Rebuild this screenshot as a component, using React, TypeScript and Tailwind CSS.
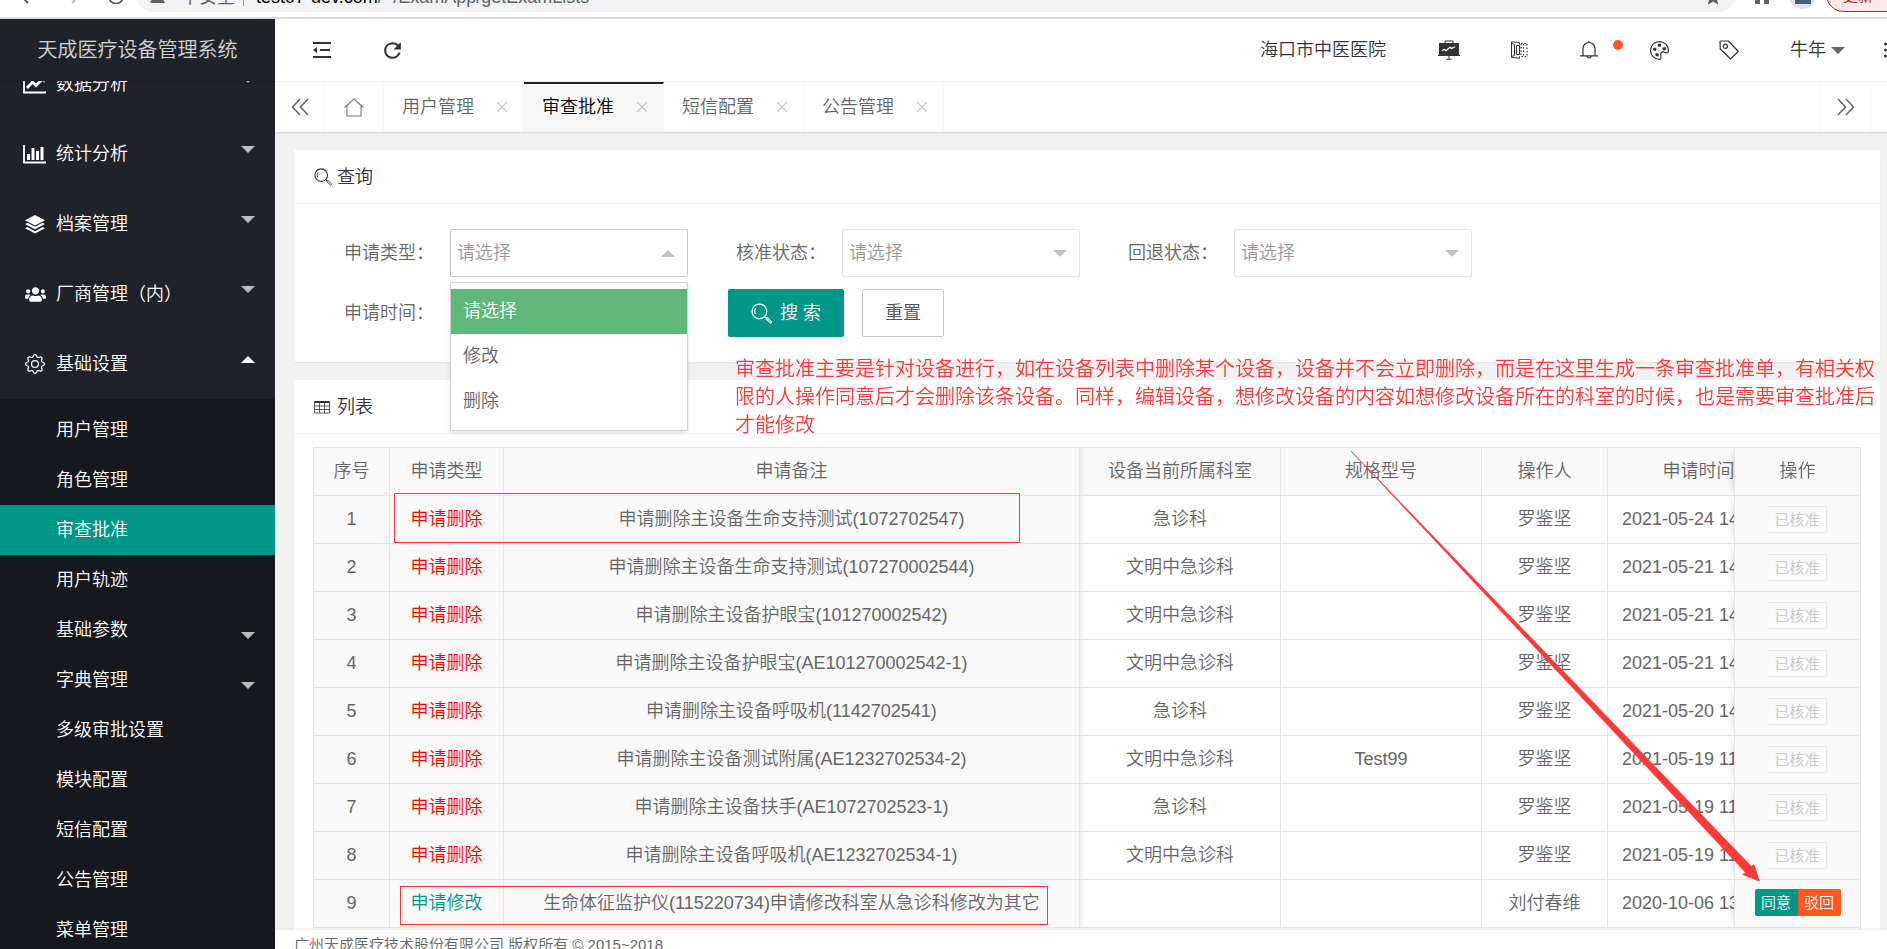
import { useState } from 'react'
import type { ReactNode } from 'react'
import clsx from 'clsx'
import { BsGear, BsPalette } from 'react-icons/bs'
import { FaUsers } from 'react-icons/fa'
import { MdRefresh } from 'react-icons/md'

const subMenu = [
  { label: '用户管理' },
  { label: '角色管理' },
  { label: '审查批准', active: true },
  { label: '用户轨迹' },
  { label: '基础参数', nested: true },
  { label: '字典管理', nested: true },
  { label: '多级审批设置' },
  { label: '模块配置' },
  { label: '短信配置' },
  { label: '公告管理' },
  { label: '菜单管理' },
]

const tabs = ['用户管理', '审查批准', '短信配置', '公告管理']

const rows = [
  { type: '申请删除', note: '申请删除主设备生命支持测试(1072702547)', dept: '急诊科', model: '', user: '罗鉴坚', time: '2021-05-24 14' },
  { type: '申请删除', note: '申请删除主设备生命支持测试(107270002544)', dept: '文明中急诊科', model: '', user: '罗鉴坚', time: '2021-05-21 14' },
  { type: '申请删除', note: '申请删除主设备护眼宝(101270002542)', dept: '文明中急诊科', model: '', user: '罗鉴坚', time: '2021-05-21 14' },
  { type: '申请删除', note: '申请删除主设备护眼宝(AE101270002542-1)', dept: '文明中急诊科', model: '', user: '罗鉴坚', time: '2021-05-21 14' },
  { type: '申请删除', note: '申请删除主设备呼吸机(1142702541)', dept: '急诊科', model: '', user: '罗鉴坚', time: '2021-05-20 14' },
  { type: '申请删除', note: '申请删除主设备测试附属(AE1232702534-2)', dept: '文明中急诊科', model: 'Test99', user: '罗鉴坚', time: '2021-05-19 11' },
  { type: '申请删除', note: '申请删除主设备扶手(AE1072702523-1)', dept: '急诊科', model: '', user: '罗鉴坚', time: '2021-05-19 11' },
  { type: '申请删除', note: '申请删除主设备呼吸机(AE1232702534-1)', dept: '文明中急诊科', model: '', user: '罗鉴坚', time: '2021-05-19 11' },
  { type: '申请修改', note: '生命体征监护仪(115220734)申请修改科室从急诊科修改为其它', dept: '', model: '', user: '刘付春维', time: '2020-10-06 13', pending: true },
]

function Caret({ up, className }: { up?: boolean; className?: string }) {
  return (
    <svg viewBox="0 0 14 7" className={clsx('h-[7px] w-[14px] fill-current', up && 'rotate-180', className)}>
      <path d="M0 0h14L7 7z" />
    </svg>
  )
}

function SearchIcon({ className }: { className?: string }) {
  return (
    <svg viewBox="0 0 20 20" className={className} fill="none" stroke="currentColor">
      <circle cx="8" cy="8" r="7" strokeWidth="1.2" />
      <path d="M4.2 10.5a5 5 0 0 1 .4-5.6" strokeWidth="1" />
      <path d="M13.3 13.2l1.6 1.4" strokeWidth="1.2" />
      <path d="M14.4 15.2l1.2-1.3 3.6 3.7a.8.8 0 0 1-1.2 1.2z" strokeWidth="1" />
    </svg>
  )
}

function LineChartIcon() {
  return (
    <svg viewBox="0 0 24 20" className="h-5 w-6" fill="none" stroke="currentColor">
      <path d="M1 1v17.5h22" strokeWidth="1.8" />
      <path d="M4 14l5.5-6 3.5 3.5L20 4.5" strokeWidth="2.8" />
      <path d="M15.5 3h6v6z" fill="currentColor" stroke="none" />
    </svg>
  )
}

function BarChartIcon() {
  return (
    <svg viewBox="0 0 24 20" className="h-5 w-6">
      <path d="M1 1v17.5h22" fill="none" stroke="currentColor" strokeWidth="1.8" />
      <path d="M4 10h3v6H4zM8.5 4h3v12h-3zM13 7h3v9h-3zM17.5 3h3v13h-3z" fill="currentColor" />
    </svg>
  )
}

function LayersIcon() {
  return (
    <svg viewBox="0 0 20 19" className="h-[19px] w-5" fill="currentColor">
      <path d="M10 0l10 5.2-10 5.3L0 5.2z" />
      <path d="M0 9l2.5-1.2L10 11.7l7.5-3.9L20 9l-10 5.2z" />
      <path d="M0 13.2L2.2 12l7.8 4.2 7.8-4.2 2.2 1.2L10 18.6z" />
    </svg>
  )
}

const menu: { label: string; icon: ReactNode; open?: boolean }[] = [
  { label: '数据分析', icon: <LineChartIcon /> },
  { label: '统计分析', icon: <BarChartIcon /> },
  { label: '档案管理', icon: <LayersIcon /> },
  { label: '厂商管理（内）', icon: <FaUsers size={21} /> },
  { label: '基础设置', icon: <BsGear size={20} />, open: true },
]

function BrowserBar() {
  return (
    <div className="flex h-[19px] shrink-0 items-end overflow-hidden border-b-2 border-[#dadce0] bg-white font-normal">
      <div className="mb-[13px] flex w-[136px] shrink-0 items-end gap-7 pl-5 text-[#5f6368]">
        <svg viewBox="0 0 16 16" className="size-4" fill="none" stroke="currentColor" strokeWidth="2">
          <path d="M15 8H2M8 1L1 8l7 7" />
        </svg>
        <svg viewBox="0 0 16 16" className="size-4 text-[#babcbe]" fill="none" stroke="currentColor" strokeWidth="2">
          <path d="M1 8h13M8 1l7 7-7 7" />
        </svg>
        <svg viewBox="0 0 16 16" className="size-4" fill="none" stroke="currentColor" strokeWidth="2">
          <path d="M14 5a7 7 0 1 0 1 4M15 1v5h-5" />
        </svg>
      </div>
      <div className="mb-[5px] flex h-[35px] flex-1 items-center rounded-full bg-[#f1f3f4] px-[14px] pt-1 text-lg text-[#5f6368]">
        <svg viewBox="0 0 16 16" className="mr-4 size-[15px] fill-current">
          <path d="M7 1h2l7 14H0z" />
        </svg>
        <span>不安全</span>
        <span className="mx-2 h-[18px] w-px bg-[#9aa0a6]" />
        <span className="ml-1 text-black">test07-dev.com</span>
        <span>/~/ExamApp/getExamLists</span>
        <svg viewBox="0 0 20 20" className="ml-auto size-[18px] fill-current">
          <path d="M10 1l2.700 6 6.300.600-4.800 4.200 1.500 6.500L10 14.900l-5.700 3.400 1.500-6.500L1 7.600 7.300 7z" />
        </svg>
      </div>
      <div className="flex w-[151px] shrink-0 items-end">
        <svg viewBox="0 0 16 16" className="mb-[13px] ml-[18px] size-4 shrink-0 fill-[#5f6368]">
          <path d="M1 4h14v12h-5v-4H6v4H1z" />
        </svg>
        <span className="mb-2 ml-[19px] flex size-[27px] shrink-0 items-center justify-center rounded-full bg-[#dee1e6]">
          <span className="size-4 bg-[#4a5b76]" />
        </span>
        <span className="mb-[5px] ml-[10px] flex h-[35px] w-24 shrink-0 items-center rounded-full border border-[#c5221f] bg-[#fce8e6] pt-1 pl-4 text-[15px] text-[#c5221f]">
          更新
        </span>
      </div>
    </div>
  )
}

function Sidebar() {
  return (
    <aside className="flex w-[275px] shrink-0 flex-col bg-[#20222a] text-white">
      <h1 className="relative z-10 flex h-[62px] shrink-0 items-center justify-center bg-[#20222a] text-[20px] text-white/80 shadow-[0_1px_2px_rgba(0,0,0,0.15)]">
        天成医疗设备管理系统
      </h1>
      <nav className="min-h-0 flex-1 overflow-hidden">
        <ul className="-mt-8">
          {menu.map((item) => (
            <li key={item.label}>
              <a href="#" className="flex h-[70px] items-center pr-5 pl-[23px] text-lg">
                <span className="mr-[9px] flex w-6 justify-center">{item.icon}</span>
                {item.label}
                <Caret up={item.open} className={clsx('mb-2.5 ml-auto', !item.open && 'text-white/70')} />
              </a>
            </li>
          ))}
        </ul>
        <ul className="bg-[#17181d] py-[6px]">
          {subMenu.map((item) => (
            <li key={item.label}>
              <a
                href="#"
                className={clsx('flex h-[50px] items-center pr-5 pl-14 text-lg', item.active && 'bg-[#009688]')}
              >
                {item.label}
                {item.nested && <Caret className="mt-2.5 ml-auto text-white/70" />}
              </a>
            </li>
          ))}
        </ul>
      </nav>
    </aside>
  )
}

function IconButton({ label, children }: { label: string; children: ReactNode }) {
  return (
    <button type="button" aria-label={label} className="relative flex h-full w-[70px] items-center justify-center">
      {children}
    </button>
  )
}

function Header() {
  return (
    <header className="flex h-[63px] shrink-0 items-center overflow-hidden border-b border-[#f6f6f6] bg-white pl-3 text-lg text-[#333]">
      <IconButton label="侧边伸缩">
        <svg viewBox="0 0 20 18" className="h-[18px] w-5 fill-current">
          <path d="M1 1h18v2H1zM1 15h18v2H1zM8 8h10v2H8zM1 9l4-3v6z" />
        </svg>
      </IconButton>
      <IconButton label="刷新">
        <MdRefresh size={25} />
      </IconButton>
      <span className="ml-auto pr-7">海口市中医医院</span>
      <IconButton label="大屏">
        <svg viewBox="0 0 22 20" className="h-5 w-[22px]" fill="none" stroke="currentColor">
          <path d="M1 3h20v12H1z" fill="currentColor" stroke="none" />
          <path d="M0 15.500h22M7 3V1h8v2M11 15v4M8.500 19.300h5" strokeWidth="1" />
          <path d="M4 10.500l2.500-1 1.500 1.300 4-3.500 1.500 1.200L17 6.800" stroke="white" strokeWidth="1.200" />
        </svg>
      </IconButton>
      <IconButton label="手册">
        <svg viewBox="0 0 18 18" className="size-[18px]" fill="none" stroke="currentColor">
          <path d="M9.500 3.500V1.500L1.500.8v15.500l8 1v-2M1.500 2.500l3 1v11l-3 1M9.500 4.500h-3v9h3z" strokeWidth="1" />
          <path d="M11 2.500h6v13h-6zM13.500 3v12" strokeWidth="1.200" strokeDasharray="1.500 1.800" />
        </svg>
      </IconButton>
      <IconButton label="消息">
        <svg viewBox="0 0 18 20" className="h-5 w-[18px]" fill="none" stroke="currentColor" strokeWidth="1.200">
          <path d="M3 15.500V8.500a6 6 0 0 1 12 0v7M0 15.800h18M6.800 16.300a2.300 2.300 0 0 0 4.400 0M9 2.300V1" />
        </svg>
        <span className="absolute top-[21px] right-[1px] size-[10px] rounded-full bg-[#ff5722]" />
      </IconButton>
      <IconButton label="主题">
        <BsPalette size={19} />
      </IconButton>
      <IconButton label="便签">
        <svg viewBox="0 0 20 20" className="size-5" fill="none" stroke="currentColor" strokeWidth="1.200">
          <path d="M1 2.200Q.8 1 2 1h7.500L19.300 11.500 11.500 19 1.300 9z" strokeLinejoin="round" />
          <circle cx="6.300" cy="6.300" r="2.100" />
        </svg>
      </IconButton>
      <button type="button" className="flex h-full items-center gap-[5px] pr-7 pl-[26px]">
        牛年
        <Caret className="text-[#666]" />
      </button>
      <button type="button" aria-label="更多" className="flex h-full w-[14px] items-center justify-end">
        <svg viewBox="0 0 3 16" className="h-4 w-[3px] fill-current">
          <circle cx="1.500" cy="2" r="1.500" />
          <circle cx="1.500" cy="8" r="1.500" />
          <circle cx="1.500" cy="14" r="1.500" />
        </svg>
      </button>
    </header>
  )
}

function TabBar() {
  return (
    <div className="relative z-10 flex h-[50px] shrink-0 bg-white text-lg text-[#666] shadow-[0_1px_2px_rgba(0,0,0,0.12)]">
      <button type="button" aria-label="向左" className="flex w-[50px] items-center justify-center border-r border-[#f6f6f6]">
        <svg viewBox="0 0 18 18" className="size-[18px]" fill="none" stroke="currentColor" strokeWidth="1.600">
          <path d="M9 1L1.500 9 9 17M17 1L9.500 9l7.500 8" />
        </svg>
      </button>
      <button type="button" aria-label="主页" className="flex w-[59px] items-center justify-center border-r border-[#f6f6f6]">
        <svg viewBox="0 0 20 19" className="h-[19px] w-5" fill="none" stroke="#777" strokeWidth="1.100">
          <path d="M.5 9.500L10 1l9.500 8.500M3 7.800V18h14V7.800" />
        </svg>
      </button>
      {tabs.map((tab) => (
        <div
          key={tab}
          className={clsx(
            'flex w-[140px] items-center justify-between border-r border-[#f6f6f6] pr-4 pl-[18px]',
            tab === '审查批准' && 'border-t-2 border-t-[#20222a] bg-[#f6f6f6] pb-[2px] text-black'
          )}
        >
          <a href="#">{tab}</a>
          <button type="button" aria-label={`关闭${tab}`} className="text-[#c2c2c2]">
            <svg viewBox="0 0 10 10" className="size-[10px]" fill="none" stroke="currentColor" strokeWidth="1.200">
              <path d="M0 0l10 10M10 0L0 10" />
            </svg>
          </button>
        </div>
      ))}
      <button
        type="button"
        aria-label="向右"
        className="mr-4 ml-auto flex w-[51px] items-center justify-center border-x border-[#f6f6f6]"
      >
        <svg viewBox="0 0 18 18" className="size-[18px]" fill="none" stroke="currentColor" strokeWidth="1.600">
          <path d="M1 1l7.500 8L1 17M9 1l7.500 8L9 17" />
        </svg>
      </button>
    </div>
  )
}

function SelectField({ id, label, open }: { id: string; label: string; open?: boolean }) {
  return (
    <div className="flex w-[392px] items-center">
      <label htmlFor={id} className="w-[106px] shrink-0">
        {label}：
      </label>
      <div className="relative w-[238px]">
        <select
          id={id}
          className={clsx(
            'h-12 w-full appearance-none rounded-[2px] border bg-white pl-[6px] text-[#999] outline-none',
            open ? 'border-[#c9c9c9]' : 'border-[#e6e6e6]'
          )}
        >
          <option>请选择</option>
        </select>
        <Caret up={open} className="pointer-events-none absolute top-[21px] right-[13px] text-[#c2c2c2]" />
        {open && (
          <ul
            role="listbox"
            aria-label={label}
            className="absolute top-[53px] left-0 z-20 w-full rounded-[2px] border border-[#d2d2d2] bg-white py-[6px] shadow-[0_2px_4px_rgba(0,0,0,0.12)]"
          >
            <li role="option" aria-selected="true" className="bg-[#5fb878] px-3 leading-[45px] text-white">
              请选择
            </li>
            <li role="option" aria-selected="false" className="px-3 leading-[45px]">
              修改
            </li>
            <li role="option" aria-selected="false" className="px-3 leading-[45px]">
              删除
            </li>
          </ul>
        )}
      </div>
    </div>
  )
}

function SearchCard({ open }: { open: boolean }) {
  return (
    <section className="rounded-[2px] bg-white shadow-[0_1px_2px_rgba(0,0,0,0.05)]">
      <h2 className="flex h-[54px] items-center gap-[5px] border-b border-[#f6f6f6] px-5 text-lg text-[#333]">
        <SearchIcon className="size-[18px]" />
        查询
      </h2>
      <form className="flex flex-col gap-3 py-[25px] pl-[50px] text-lg">
        <div className="flex flex-wrap">
          <SelectField id="apply-type" label="申请类型" open={open} />
          <SelectField id="approve-state" label="核准状态" />
          <SelectField id="return-state" label="回退状态" />
        </div>
        <div className="flex items-center">
          <span className="w-96">申请时间：</span>
          <button
            type="button"
            className="flex h-12 w-[116px] items-center justify-center gap-2 rounded-[2px] bg-[#009688] text-white"
          >
            <SearchIcon className="size-[21px]" />
            搜 索
          </button>
          <button type="reset" className="ml-[18px] h-12 w-[82px] rounded-[2px] border border-[#c9c9c9] text-[#555]">
            重置
          </button>
        </div>
      </form>
    </section>
  )
}

const th = 'h-12 border-r border-b border-[#e6e6e6] bg-[#f9f9f9] p-0 pb-0.5 font-[350]'
const td = 'h-12 border-r border-b border-[#e6e6e6] p-0 pb-0.5 text-center'
const fixedRight =
  'sticky right-0 z-10 border-r-0 border-l bg-[#f9f9f9] shadow-[-7px_0_7px_-6px_rgba(0,0,0,0.15)]'

function ListCard() {
  return (
    <section className="rounded-[2px] bg-white">
      <h2 className="flex h-[54px] items-center gap-[7px] border-b border-[#f6f6f6] px-5 text-lg text-[#333]">
        <svg viewBox="0 0 16 14" className="h-[14px] w-4" fill="none" stroke="currentColor">
          <path d="M.5 2h15" strokeWidth="2" />
          <path d="M.5 1.500v11.500h15V1.500M.5 6h15M.5 9.500h15M5.500 2v11M10.500 2v11" strokeWidth=".8" />
        </svg>
        列表
      </h2>
      <div className="mx-[19px] mt-[13px] overflow-hidden border border-[#e6e6e6]">
        <table className="w-full min-w-[1602px] table-fixed border-separate border-spacing-0 text-lg whitespace-nowrap">
          <colgroup>
            <col className="w-[76px]" />
            <col className="w-[114px]" />
            <col />
            <col className="w-[201px]" />
            <col className="w-[201px]" />
            <col className="w-[126px]" />
            <col className="w-[182px]" />
            <col className="w-[126px]" />
          </colgroup>
          <thead>
            <tr>
              <th className={th}>序号</th>
              <th className={th}>申请类型</th>
              <th className={th}>申请备注</th>
              <th className={clsx(th, 'shadow-[inset_8px_0_8px_-8px_rgba(0,0,0,0.12)]')}>设备当前所属科室</th>
              <th className={th}>规格型号</th>
              <th className={th}>操作人</th>
              <th className={th}>申请时间</th>
              <th className={clsx(th, fixedRight)}>操作</th>
            </tr>
          </thead>
          <tbody>
            {rows.map((row, i) => (
              <tr key={row.note}>
                <td className={clsx(td, 'bg-[#f9f9f9]')}>{i + 1}</td>
                <td className={clsx(td, 'bg-[#f9f9f9]', row.pending ? 'text-[#009688]' : 'text-[#ff0000]')}>
                  {row.type}
                </td>
                <td className={clsx(td, 'bg-[#f9f9f9]')}>{row.note}</td>
                <td className={clsx(td, 'shadow-[inset_8px_0_8px_-8px_rgba(0,0,0,0.12)]')}>{row.dept}</td>
                <td className={td}>{row.model}</td>
                <td className={td}>{row.user}</td>
                <td className="h-12 border-r border-b border-[#e6e6e6] p-0 pb-0.5 pl-[14px] text-left">{row.time}</td>
                <td className={clsx(td, fixedRight)}>
                  {row.pending ? (
                    <div className="flex justify-center text-[15px] text-white">
                      <button type="button" className="h-[27px] w-[43px] rounded-l-[2px] bg-[#009688]">
                        同意
                      </button>
                      <button type="button" className="h-[27px] w-[43px] rounded-r-[2px] bg-[#ff5722]">
                        驳回
                      </button>
                    </div>
                  ) : (
                    <button
                      type="button"
                      disabled
                      className="mx-auto mt-0.5 block h-[27px] w-[58px] rounded-r-[2px] border border-l-0 border-[#e6e6e6] bg-[#fbfbfb] text-[15px] leading-none text-[#c9c9c9]"
                    >
                      已核准
                    </button>
                  )}
                </td>
              </tr>
            ))}
            <tr className="bg-[#f9f9f9]">
              <td colSpan={8} className="h-12" />
            </tr>
          </tbody>
        </table>
      </div>
    </section>
  )
}

// Red notes drawn over the page
function Annotations() {
  return (
    <div className="pointer-events-none absolute inset-0 z-30 text-[#ff3838]">
      <p className="absolute top-[355px] left-[735px] w-[1146px] text-[20px] leading-[28px]">
        审查批准主要是针对设备进行，如在设备列表中删除某个设备，设备并不会立即删除，而是在这里生成一条审查批准单，有相关权限的人操作同意后才会删除该条设备。同样，编辑设备，想修改设备的内容如想修改设备所在的科室的时候，也是需要审查批准后才能修改
      </p>
      <div className="absolute top-[493px] left-[394px] h-[50px] w-[626px] border border-current" />
      <div className="absolute top-[886px] left-[400px] h-[39px] w-[648px] border border-current" />
      <svg
        viewBox="0 0 410 432"
        className="absolute top-[451px] left-[1351px] h-[432px] w-[410px] fill-current stroke-current"
      >
        <path
          strokeWidth=".6"
          d="M0 0L400.500 415.500 403 413.500 408.500 430.300 391.500 423.500 394.500 421.500z"
        />
      </svg>
    </div>
  )
}

export default function App() {
  const [typeOpen] = useState(true)

  return (
    <div className="relative flex h-screen flex-col overflow-hidden bg-[#f2f2f2] font-['Liberation_Sans','Noto_Sans_CJK_SC',sans-serif] font-[350] text-[#666]">
      <BrowserBar />
      <div className="flex min-h-0 flex-1">
        <Sidebar />
        <div className="flex min-w-0 flex-1 flex-col">
          <Header />
          <TabBar />
          <main className="flex min-h-0 flex-1 flex-col gap-[18px] overflow-hidden pt-[18px] pr-[7px] pl-[19px]">
            <SearchCard open={typeOpen} />
            <ListCard />
          </main>
          <footer className="relative h-[19px] shrink-0 overflow-hidden bg-white pl-[19px] text-[15px] leading-[30px] shadow-[0_-1px_2px_rgba(0,0,0,0.05)]">
            广州天成医疗技术股份有限公司 版权所有 © 2015~2018
          </footer>
        </div>
      </div>
      <Annotations />
    </div>
  )
}
